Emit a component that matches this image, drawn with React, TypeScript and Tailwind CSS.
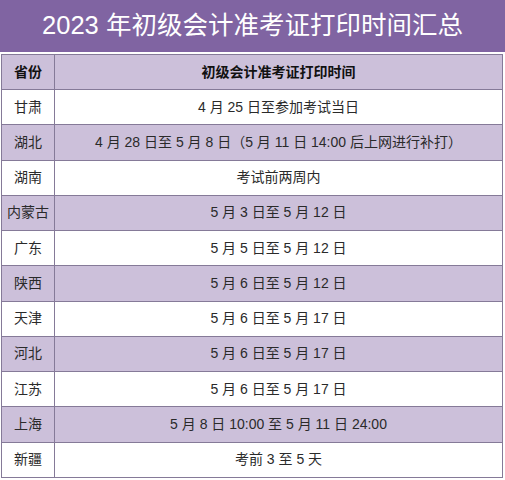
import React from "react";

const rows: [string, string][] = [
  ["甘肃", "4 月 25 日至参加考试当日"],
  ["湖北", "4 月 28 日至 5 月 8 日（5 月 11 日 14:00 后上网进行补打）"],
  ["湖南", "考试前两周内"],
  ["内蒙古", "5 月 3 日至 5 月 12 日"],
  ["广东", "5 月 5 日至 5 月 12 日"],
  ["陕西", "5 月 6 日至 5 月 12 日"],
  ["天津", "5 月 6 日至 5 月 17 日"],
  ["河北", "5 月 6 日至 5 月 17 日"],
  ["江苏", "5 月 6 日至 5 月 17 日"],
  ["上海", "5 月 8 日 10:00 至 5 月 11 日 24:00"],
  ["新疆", "考前 3 至 5 天"],
];

export default function App() {
  return (
    <div
      className="w-[505px] h-[480px] bg-white overflow-hidden"
      style={{ fontFamily: '"Liberation Sans", "Noto Sans CJK SC", sans-serif' }}
    >
      <div className="h-[52px] bg-[#8064a2] flex items-center justify-center text-white text-[25.5px] leading-none">
        2023 年初级会计准考证打印时间汇总
      </div>
      <div className="mt-[2px] ml-[1px] w-[502px] border-l border-r border-t border-[#857a98]">
        <div className="flex h-[35px] border-b border-[#857a98] bg-[#ccc0da] text-[14px] font-bold text-[#111]">
          <div className="w-[53px] border-r border-[#857a98] flex items-center justify-center">省份</div>
          <div className="flex-1 flex items-center justify-center">初级会计准考证打印时间</div>
        </div>
        {rows.map(([p, t], i) => (
          <div
            key={p}
            className={
              "flex h-[35.27px] border-b border-[#857a98] text-[14px] text-[#2a2a2a] " +
              (i % 2 === 1 ? "bg-[#ccc0da]" : "bg-white")
            }
          >
            <div className="w-[53px] border-r border-[#857a98] flex items-center justify-center">{p}</div>
            <div className="flex-1 flex items-center justify-center">{t}</div>
          </div>
        ))}
      </div>
    </div>
  );
}
